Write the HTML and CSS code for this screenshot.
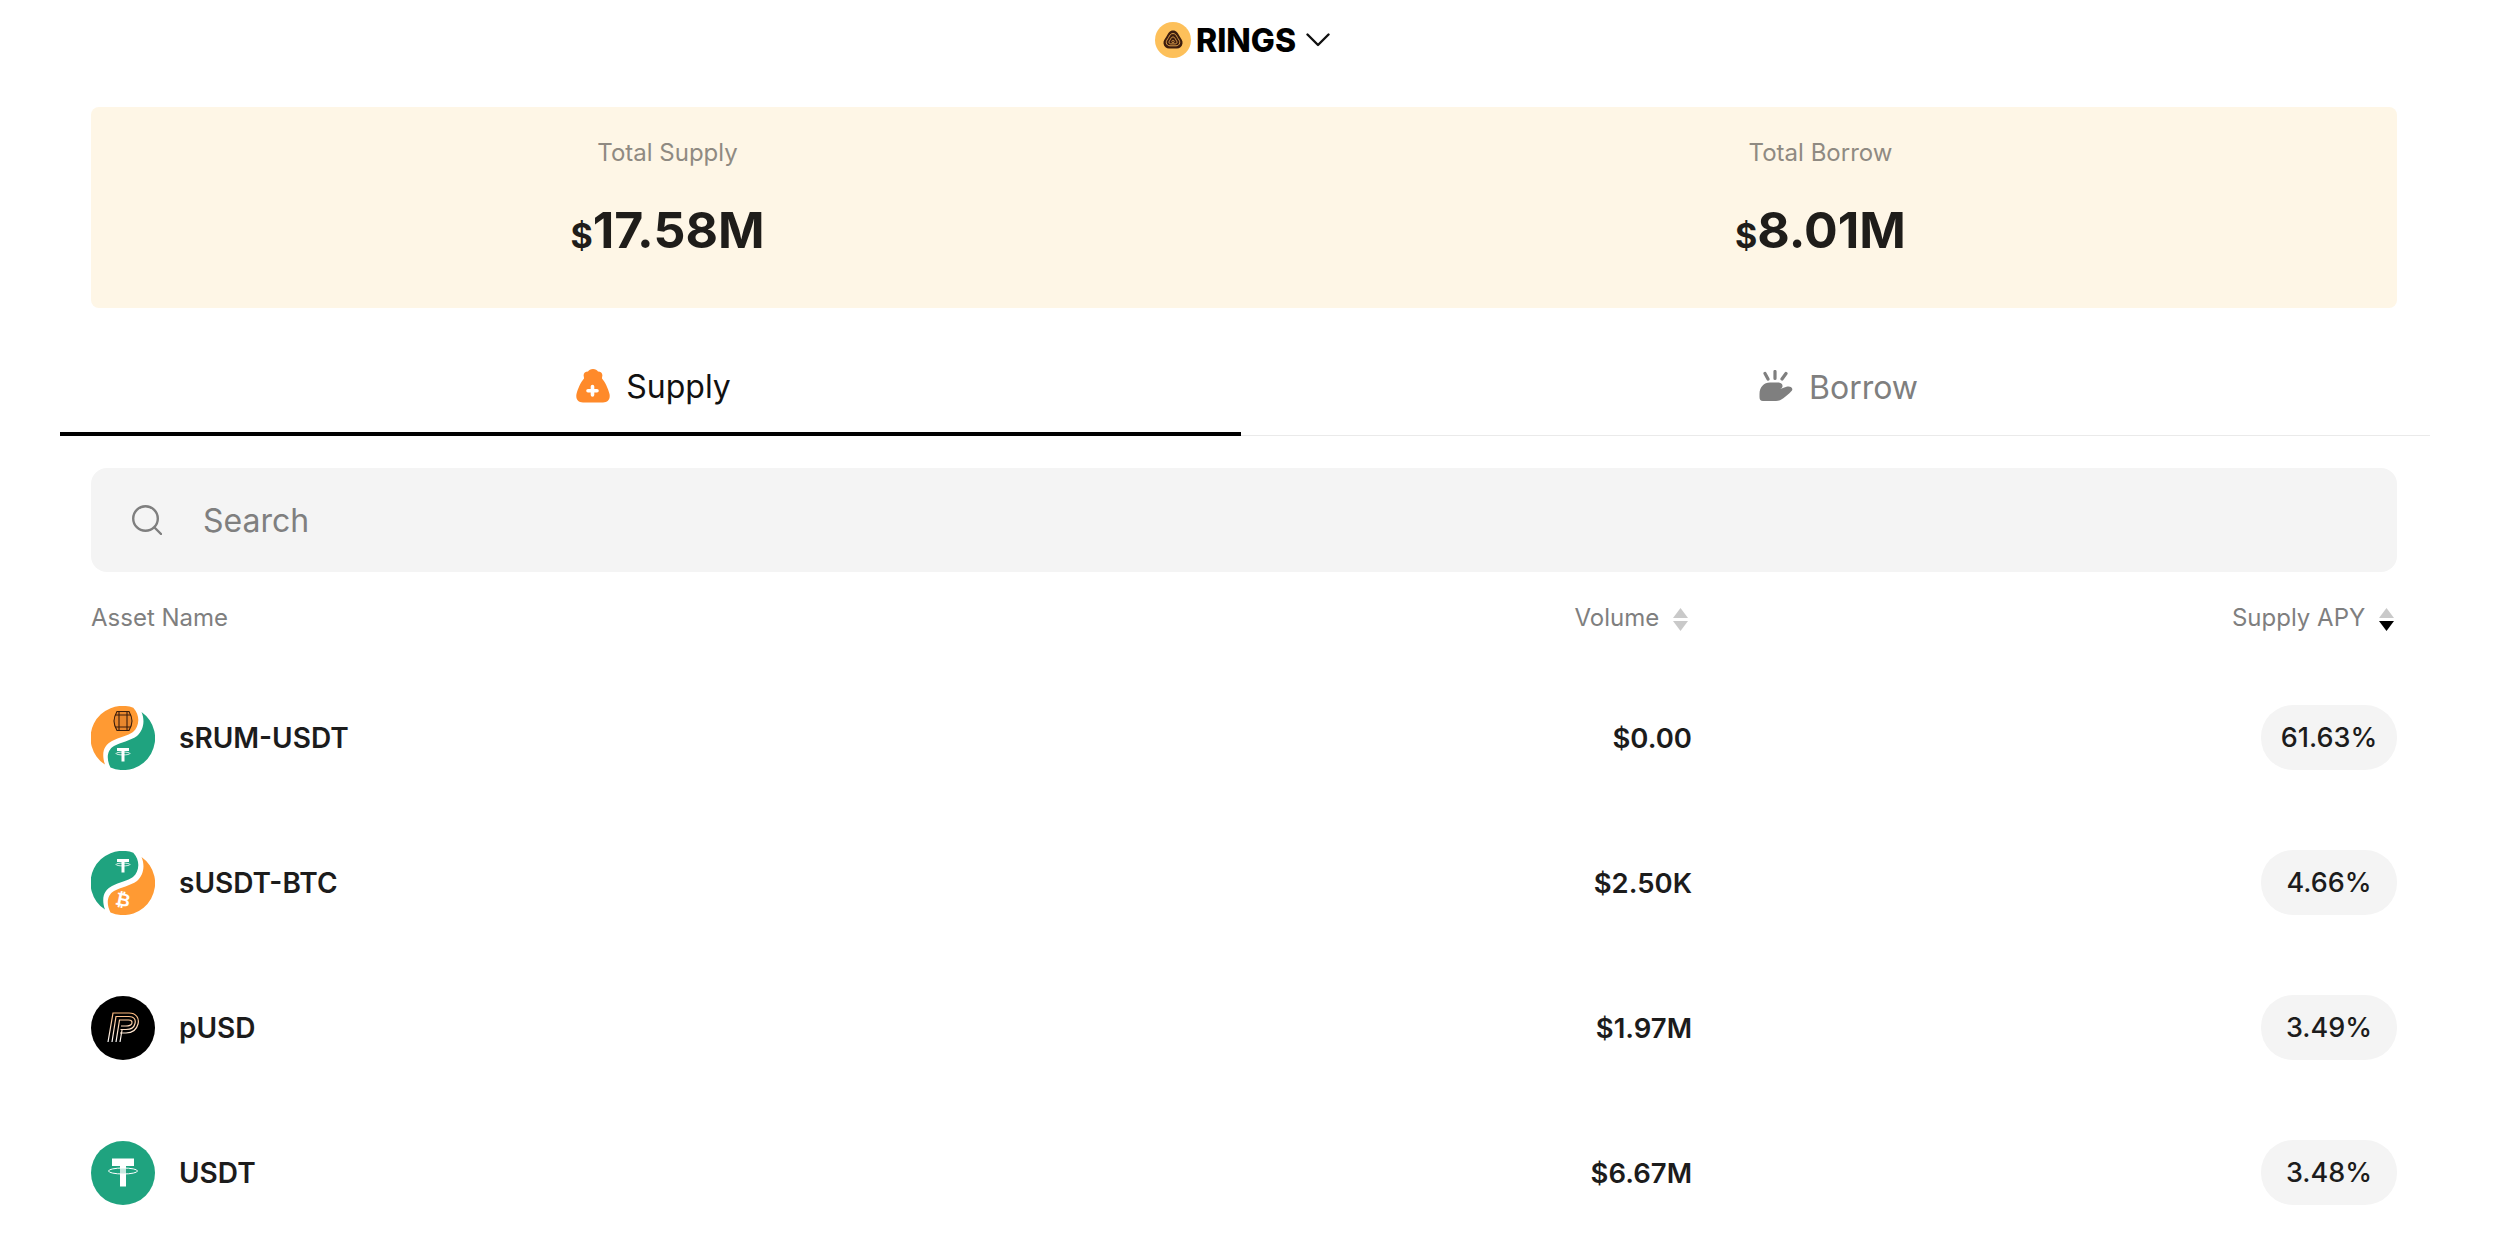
FILE: index.html
```html
<!DOCTYPE html>
<html lang="en">

<head>
  <meta charset="UTF-8">
  <meta name="viewport" content="width=device-width, initial-scale=1.0">
  <title>Rings Supply</title>
  <link rel="stylesheet" href="styles.css">
</head>

<body>
  <main class="page">
    <header class="top">
      <svg class="logo" viewBox="0 0 36 36">
        <circle cx="18" cy="18" r="18" fill="#fdc05a" />
        <path d="M18 8.500c3.500 0 5 2.500 6.500 5.500 1.500 2.800 3.500 4.800 3 7.500-.5 3.300-3 5-5.500 5h-8c-2.500 0-5-1.700-5.500-5-.4-2.700 1.600-4.700 3.200-7.500C13.300 11 14.500 8.500 18 8.500z" fill="#3d1d0e" />
        <path d="M18 11.500c2.300 0 3.300 1.800 4.300 3.800 1.100 2 2.700 3.600 2.400 5.500-.3 2-2 3-3.700 3h-6c-1.700 0-3.400-1-3.700-3-.3-1.900 1.300-3.500 2.400-5.500 1-2 2-3.800 4.300-3.800z" fill="none" stroke="#e8a84f" stroke-width=".9" />
        <path d="M18 15c1.300 0 1.900 1 2.500 2.200.7 1.300 1.700 2.200 1.500 3.300-.2 1-1 1.400-2 1.400h-4c-1 0-1.800-.4-2-1.400-.2-1.100.8-2 1.500-3.300.6-1.200 1.200-2.200 2.500-2.200z" fill="none" stroke="#e8a84f" stroke-width=".9" />
        <circle cx="18" cy="19.500" r="1.200" fill="none" stroke="#e8a84f" stroke-width=".7" />
      </svg>
      <span class="brand">RINGS</span>
      <svg class="chevron" viewBox="0 0 24 14">
        <path d="M1.500 1.500 12 12 22.500 1.500" fill="none" stroke="#111" stroke-width="2.400" stroke-linecap="round" stroke-linejoin="round" />
      </svg>
    </header>

    <section class="totals">
      <div class="total">
        <p class="total-label">Total Supply</p>
        <p class="total-value"><span class="unit">$</span>17.58M</p>
      </div>
      <div class="total">
        <p class="total-label">Total Borrow</p>
        <p class="total-value"><span class="unit">$</span>8.01M</p>
      </div>
    </section>

    <nav class="tabs">
      <div class="tab active">
        <svg class="tab-icon" viewBox="0 0 34 34">
          <path d="M17 0C19.500 0 21 1 22 2.500C25 2.500 26.800 4.500 26.300 7C26.100 8 26 8.800 26 9.500C29 13 32 19 33.500 25C34.500 30 32 33.500 27 33.500H7C2 33.500-.5 30 .5 25C2 19 5 13 8 9.500C8 8.800 7.900 8 7.700 7C7.200 4.500 9 2.500 12 2.500C13 1 14.500 0 17 0Z" fill="#ff8a2a" />
          <path d="M16.500 17.500v8.500M12 21.700h9" fill="none" stroke="#fff" stroke-width="3.600" stroke-linecap="round" />
        </svg>
        <span>Supply</span>
      </div>
      <div class="tab">
        <svg class="tab-icon" viewBox="0 0 34 34">
          <path d="M.5 24C.5 17 5 12.500 11 12.500H19C22 12.500 24 14.500 23.500 16.500C23 18.500 21 19.500 18 20L27.500 16.800C31 15.500 34.500 18 33 20.500C30 24 25 28 21.500 30C20 30.800 18.500 31 17 31H4C1.500 31 .5 29.500 .5 27Z" fill="#7f7f7f" />
          <path d="M6 3.500 9 9M16 1.500V8.500M27 3.500 23 9" fill="none" stroke="#7f7f7f" stroke-width="3.200" stroke-linecap="round" />
        </svg>
        <span>Borrow</span>
      </div>
    </nav>

    <div class="content">
      <div class="search">
        <svg class="search-icon" viewBox="0 0 30 30">
          <circle cx="13.500" cy="13.500" r="12.300" fill="none" stroke="#7f7f7f" stroke-width="2.400" />
          <path d="M23 23 29 29" fill="none" stroke="#7f7f7f" stroke-width="2.400" stroke-linecap="round" />
        </svg>
        <span>Search</span>
      </div>

      <div class="row head">
        <div>Asset Name</div>
        <div class="col-volume">Volume
          <svg class="sort" viewBox="0 0 15 23">
            <path d="M7.500 0 15 10H0z" fill="#c9c9c9" />
            <path d="M7.500 23 15 13H0z" fill="#c9c9c9" />
          </svg>
        </div>
        <div class="col-apy">Supply APY
          <svg class="sort" viewBox="0 0 15 23">
            <path d="M7.500 0 15 10H0z" fill="#c9c9c9" />
            <path d="M7.500 23 15 13H0z" fill="#000" />
          </svg>
        </div>
      </div>

      <div class="row asset">
        <div class="name">
          <svg class="coin" viewBox="0 0 64 64">
            <path d="M42.300 1.700A32 32 0 0 0 14 58.600C10 47 13 39 21 35C28 31 37 30 42 26C48 21 50 10 42.300 1.700Z" fill="#ff9a33" />
            <path d="M50.500 5.900A32 32 0 0 1 19.500 61.500C15 53 16 44 23 40C30 36 39 35 46 30C53 24 54 14 50.500 5.900Z" fill="#1fa37f" />
            <g fill="none" stroke="#3a1d0c" stroke-width="1.100">
              <path d="M26 5.500h12c2 3.500 3 6 3 9.500s-1 6-3 9.500H26c-2-3.500-3-6-3-9.500s1-6 3-9.500z" fill="#e8872d" />
              <path d="M24.500 9h15M24.500 21h15M28 5.500v19M36 5.500v19" />
            </g>
            <path d="M26 42h12v3h-4.500v10.500h-3V45H26z" fill="#fff" />
            <ellipse cx="32" cy="47.500" rx="7" ry="1.400" fill="none" stroke="#fff" stroke-width=".8" />
          </svg>
          <span>sRUM-USDT</span>
        </div>
        <div class="volume">$0.00</div>
        <div class="apy"><span class="pill">61.63%</span></div>
      </div>

      <div class="row asset">
        <div class="name">
          <svg class="coin" viewBox="0 0 64 64">
            <path d="M42.300 1.700A32 32 0 0 0 14 58.600C10 47 13 39 21 35C28 31 37 30 42 26C48 21 50 10 42.300 1.700Z" fill="#1fa37f" />
            <path d="M50.500 5.900A32 32 0 0 1 19.500 61.500C15 53 16 44 23 40C30 36 39 35 46 30C53 24 54 14 50.500 5.900Z" fill="#ff9a33" />
            <path d="M26 8h12v3h-4.500v10.500h-3V11H26z" fill="#fff" />
            <ellipse cx="32" cy="13.500" rx="7" ry="1.400" fill="none" stroke="#fff" stroke-width=".8" />
            <text class="btc" x="32" y="55" transform="rotate(12 32 49)">₿</text>
          </svg>
          <span>sUSDT-BTC</span>
        </div>
        <div class="volume">$2.50K</div>
        <div class="apy"><span class="pill">4.66%</span></div>
      </div>

      <div class="row asset">
        <div class="name">
          <svg class="coin" viewBox="0 0 64 64">
            <defs>
              <linearGradient id="pusd" gradientUnits="userSpaceOnUse" x1="0" y1="16" x2="0" y2="46">
                <stop offset="0" stop-color="#ffb778" />
                <stop offset="1" stop-color="#fff" />
              </linearGradient>
            </defs>
            <circle cx="32" cy="32" r="32" fill="#000" />
            <g fill="none" stroke="url(#pusd)" stroke-width="1.200">
              <path d="M17 46 22 17H38C45 17 48.500 22 47 28C45.500 34 41 37 35 37H29" />
              <path d="M21 46 25 20.500H38C43 20.500 45 23.500 44 27.500C43 32 39.500 33.500 35 33.500H29.500" />
              <path d="M25 46 28.500 24H37.500C40.500 24 41.500 25.500 40.800 27.500C40 29.500 38 30 35 30H30" />
              <path d="M29 46 31 34" />
            </g>
          </svg>
          <span>pUSD</span>
        </div>
        <div class="volume">$1.97M</div>
        <div class="apy"><span class="pill">3.49%</span></div>
      </div>

      <div class="row asset">
        <div class="name">
          <svg class="coin" viewBox="0 0 64 64">
            <circle cx="32" cy="32" r="32" fill="#1fa37f" />
            <path d="M21 17.500h22V25h-8v20.500h-6V25h-8z" fill="#fff" />
            <ellipse cx="32" cy="30" rx="14.500" ry="3" fill="#1fa37f" fill-opacity=".25" stroke="#fff" stroke-width="1" />
          </svg>
          <span>USDT</span>
        </div>
        <div class="volume">$6.67M</div>
        <div class="apy"><span class="pill">3.48%</span></div>
      </div>
    </div>
  </main>
</body>

</html>
```

FILE: styles.css
```css
* {
  box-sizing: border-box;
  margin: 0;
  padding: 0;
}

html,
body {
  height: 100%;
  overflow: hidden;
}

body {
  background: #fff;
  color: #1c1c1c;
  font-family: Inter, "Liberation Sans", sans-serif;
}

.page {
  width: 2490px;
  padding: 0 60px;
}

.top {
  display: flex;
  align-items: center;
  justify-content: center;
  height: 80px;
  padding-right: 5px;
}

.logo {
  width: 36px;
  height: 36px;
  margin-right: 5px;
}

.brand {
  font-size: 32px;
  font-weight: 800;
  color: #000;
}

.chevron {
  width: 24px;
  height: 14px;
  margin-left: 10px;
}

.totals {
  display: flex;
  margin: 27px 33px 0 31px;
  height: 201px;
  background: #fef6e6;
  border-radius: 8px;
}

.total {
  flex: 1;
  text-align: center;
  padding-top: 32px;
}

.total-label {
  font-size: 24px;
  line-height: 28px;
  color: #8f8a82;
}

.total-value {
  margin-top: 33px;
  font-size: 50px;
  line-height: 60px;
  font-weight: 700;
  color: #1f1d1a;
}

.unit {
  font-size: 34px;
}

.tabs {
  display: flex;
  height: 128px;
  border-bottom: 1px solid #eaeaea;
}

.tab {
  flex: 1;
  display: flex;
  align-items: center;
  justify-content: center;
  gap: 16px;
  padding: 31px 0 0 6px;
  font-size: 32px;
  color: #7f7f7f;
}

.tab.active {
  flex: 0 0 1181px;
  padding-top: 32px;
  color: #111;
  border-bottom: 4px solid #000;
  margin-bottom: -1px;
}

.tab-icon {
  width: 34px;
  height: 34px;
}

.content {
  padding: 32px 33px 0 31px;
}

.search {
  display: flex;
  align-items: center;
  height: 104px;
  padding: 0 41px;
  gap: 41px;
  background: #f4f4f4;
  border-radius: 16px;
  font-size: 32px;
  color: #7f7f7f;
}

.search-icon {
  width: 30px;
  height: 30px;
}

.row {
  display: grid;
  grid-template-columns: 1fr 560px 705px;
  align-items: center;
}

.head {
  height: 92px;
  padding-bottom: 1px;
  margin-bottom: 1px;
  font-size: 24px;
  color: #7f7f7f;
}

.col-volume,
.col-apy,
.volume,
.apy {
  text-align: right;
}

.sort {
  width: 15px;
  height: 23px;
  margin: 0 3px 0 7px;
  vertical-align: -5px;
}

.col-volume .sort {
  margin-right: 4px;
}

.asset {
  height: 145px;
  font-size: 28px;
  font-weight: 600;
}

.volume {
  font-size: 27.5px;
}

.name {
  display: flex;
  align-items: center;
  gap: 24px;
}

.coin {
  width: 64px;
  height: 64px;
}

.btc {
  font-family: "DejaVu Sans", sans-serif;
  font-size: 18px;
  font-weight: 700;
  fill: #fff;
  text-anchor: middle;
}

.pill {
  display: inline-block;
  width: 136px;
  height: 65px;
  line-height: 65px;
  border-radius: 32px;
  background: #f4f4f4;
  font-size: 27px;
  font-weight: 500;
  text-align: center;
}
```
